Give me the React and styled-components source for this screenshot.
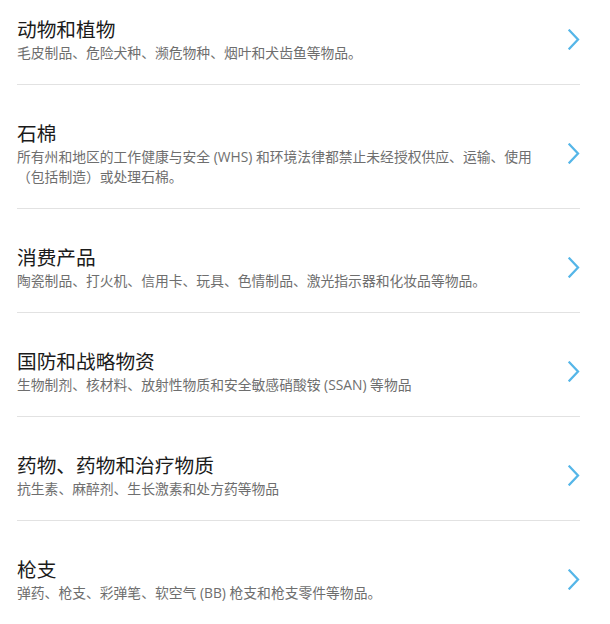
import styled, { createGlobalStyle } from "styled-components";

const GlobalStyle = createGlobalStyle`
  html, body {
    margin: 0;
    padding: 0;
    background: #ffffff;
  }
  body {
    font-family: "Open Sans", "Noto Sans CJK SC", sans-serif;
  }
`;

const categories = [
  {
    title: "动物和植物",
    text: "毛皮制品、危险犬种、濒危物种、烟叶和犬齿鱼等物品。",
  },
  {
    title: "石棉",
    text: "所有州和地区的工作健康与安全 (WHS) 和环境法律都禁止未经授权供应、运输、使用（包括制造）或处理石棉。",
  },
  {
    title: "消费产品",
    text: "陶瓷制品、打火机、信用卡、玩具、色情制品、激光指示器和化妆品等物品。",
  },
  {
    title: "国防和战略物资",
    text: "生物制剂、核材料、放射性物质和安全敏感硝酸铵 (SSAN) 等物品",
  },
  {
    title: "药物、药物和治疗物质",
    text: "抗生素、麻醉剂、生长激素和处方药等物品",
  },
  {
    title: "枪支",
    text: "弹药、枪支、彩弹笔、软空气 (BB) 枪支和枪支零件等物品。",
  },
];

function Chevron() {
  return (
    <svg width="12" height="21" viewBox="0 0 12 21" fill="none">
      <polyline
        points="1.5,1.5 10,10.5 1.5,19.5"
        stroke="#55b6e8"
        strokeWidth="2.3"
        strokeLinecap="square"
      />
    </svg>
  );
}

export default function App() {
  return (
    <>
      <GlobalStyle />
      <List>
        {categories.map((c) => (
          <Item key={c.title}>
            <Text>
              <Title>{c.title}</Title>
              <Description>{c.text}</Description>
            </Text>
            <Arrow>
              <Chevron />
            </Arrow>
          </Item>
        ))}
      </List>
    </>
  );
}

const List = styled.ul`
  list-style: none;
  margin: 0;
  padding: 0 30px 0 17px;
`;

const Item = styled.li`
  display: flex;
  align-items: center;
  padding: 36px 0 21px;
  border-bottom: 1px solid #e2e2e2;
  cursor: pointer;

  &:first-child {
    padding-top: 16.5px;
  }
`;

const Text = styled.div`
  flex: 1;
  min-width: 0;
`;

const Title = styled.h2`
  margin: 0;
  font-size: 19.7px;
  line-height: 26px;
  font-weight: 400;
  color: #1b1b1b;
`;

const Description = styled.p`
  margin: 0;
  font-size: 13.8px;
  line-height: 20px;
  color: #6e6e6e;
`;

const Arrow = styled.div`
  width: 38px;
  display: flex;
  justify-content: flex-end;
`;
